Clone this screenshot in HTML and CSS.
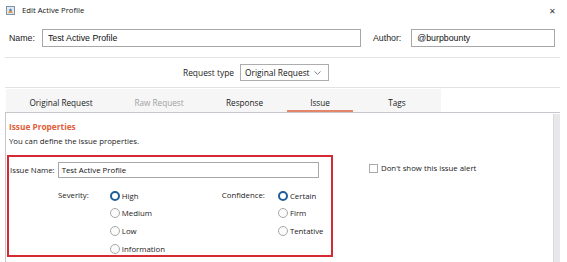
FILE: index.html
```html
<!DOCTYPE html>
<html lang="en">
<head>
    <meta charset="UTF-8">
    <title>Edit Active Profile</title>
    <link rel="stylesheet" href="styles.css">
</head>
<body>
    <div class="dialog">
        <div class="titlebar">
            <svg class="app-icon" width="9" height="9" viewBox="0 0 9 9">
                <rect x="0.5" y="0.5" width="8" height="8" fill="#dfe8f2" stroke="#7d93ad"/>
                <path d="M2 7 L4.5 2.5 L7 7 Z" fill="#e59a3c"/>
                <circle cx="4.5" cy="4" r="1.2" fill="#4f7fb8"/>
            </svg>
            <span class="title">Edit Active Profile</span>
            <span class="close">&#x2715;</span>
        </div>

        <div class="name-row">
            <label class="field-label">Name:</label>
            <div class="text-input name-input">Test Active Profile</div>
            <label class="field-label author-label">Author:</label>
            <div class="text-input author-input">@burpbounty</div>
        </div>

        <div class="separator"></div>

        <div class="reqtype-row">
            <span class="reqtype-label">Request type</span>
            <div class="select">
                <span>Original Request</span>
                <svg width="7" height="4" viewBox="0 0 7 4"><path d="M0.5 0.5 L3.5 3.3 L6.5 0.5" fill="none" stroke="#777" stroke-width="0.9"/></svg>
            </div>
        </div>

        <div class="separator sep-low"></div>

        <div class="tabs">
            <div class="tab tab-original">Original Request</div>
            <div class="tab tab-raw disabled">Raw Request</div>
            <div class="tab tab-response">Response</div>
            <div class="tab tab-issue active">Issue</div>
            <div class="tab tab-tags">Tags</div>
        </div>

        <div class="panel">
            <div class="panel-body">
                <div class="section-title">Issue Properties</div>
                <div class="section-desc">You can define the issue properties.</div>

                <div class="issue-row">
                    <div class="highlight-box">
                        <div class="issue-name">
                            <span>Issue Name:</span>
                            <div class="text-input issue-input">Test Active Profile</div>
                        </div>
                        <div class="options">
                            <div class="group group-severity">
                                <span class="group-label">Severity:</span>
                                <div class="radios radios-severity">
                                    <div class="radio checked"><i></i>High</div>
                                    <div class="radio"><i></i>Medium</div>
                                    <div class="radio"><i></i>Low</div>
                                    <div class="radio"><i></i>Information</div>
                                </div>
                            </div>
                            <div class="group group-confidence">
                                <span class="group-label">Confidence:</span>
                                <div class="radios">
                                    <div class="radio checked"><i></i>Certain</div>
                                    <div class="radio"><i></i>Firm</div>
                                    <div class="radio"><i></i>Tentative</div>
                                </div>
                            </div>
                        </div>
                    </div>
                    <div class="checkbox"><i></i>Don't show this issue alert</div>
                </div>
            </div>
            <div class="scrollbar"></div>
        </div>
    </div>
</body>
</html>
```

FILE: styles.css
```css
body {
    margin: 0;
    background: #fff;
    font-family: "Open Sans", "Noto Sans", sans-serif;
    color: #222;
}
.dialog {
    width: 567px;
    height: 262px;
    overflow: hidden;
    background: #fff;
}
.titlebar {
    height: 20px;
    display: flex;
    align-items: center;
    padding: 0 11px 0 6px;
}
.app-icon {
    margin-right: 7px;
}
.title {
    font-size: 7.7px;
    color: #111;
    flex: 1;
}
.close {
    font-size: 8px;
    color: #333;
}
.name-row {
    display: flex;
    align-items: center;
    margin-top: 9px;
    padding-left: 9px;
    font-family: "Liberation Sans", Arial, sans-serif;
    font-size: 8.8px;
}
.field-label {
    color: #222;
}
.text-input {
    height: 16px;
    line-height: 16px;
    border: 1px solid #a7a7a7;
    padding: 0 5px;
    box-sizing: content-box;
    color: #111;
    background: #fff;
}
.name-input {
    margin-left: 7px;
    width: 307px;
}
.author-label {
    margin-left: 12px;
}
.author-input {
    margin-left: 10px;
    width: 132px;
}
.separator {
    height: 1px;
    background: #e2e2e2;
    margin: 10px 7px 0 5px;
}
.sep-low {
    margin-top: 6px;
}
.reqtype-row {
    display: flex;
    align-items: center;
    margin-top: 6px;
    padding-left: 183px;
    font-size: 8.4px;
}
.select {
    margin-left: 6px;
    width: 76px;
    height: 15px;
    border: 1px solid #adadad;
    display: flex;
    align-items: center;
    justify-content: space-between;
    padding: 0 7px 0 4px;
    color: #111;
}
.tabs {
    display: flex;
    margin: 1px 0 0 6px;
    width: 435px;
    height: 23px;
    background: #f6f6f6;
    font-size: 8.2px;
}
.tab {
    box-sizing: border-box;
    text-align: center;
    padding-top: 8px;
    color: #1a1a1a;
}
.tab-original { width: 110px; }
.tab-raw { width: 86px; }
.tab-response { width: 85px; }
.tab-issue { width: 66px; }
.tab-tags { width: 88px; }
.tab.disabled {
    color: #a0a0a0;
}
.tab.active {
    border-bottom: 2px solid #e2856b;
}
.panel {
    display: flex;
    margin-left: 5px;
    width: 555px;
    height: 160px;
    border-top: 1px solid #c6c6cc;
    border-left: 1px solid #c6c6cc;
    box-sizing: border-box;
}
.panel-body {
    flex: 1;
    padding: 8px 0 0 3px;
}
.scrollbar {
    width: 6px;
    background: #e8e8ea;
    border-left: 1px solid #dadadd;
    margin-top: 1px;
}
.section-title {
    font-size: 8.3px;
    font-weight: bold;
    color: #e0603a;
    line-height: 12px;
}
.section-desc {
    font-size: 7.8px;
    margin-top: 3px;
    line-height: 11px;
    color: #1a1a1a;
}
.issue-row {
    display: flex;
    align-items: flex-start;
    margin-top: 8px;
    margin-left: -2px;
}
.highlight-box {
    width: 322px;
    height: 98px;
    border: 2px solid #d52a33;
    font-size: 7.8px;
}
.issue-name {
    display: flex;
    align-items: center;
    margin-top: 5px;
    padding-left: 1px;
}
.issue-input {
    margin-left: 3px;
    width: 253px;
    height: 14px;
    line-height: 14px;
    font-size: 7.8px;
    font-family: "Open Sans", "Noto Sans", sans-serif;
    padding: 0 3px;
}
.options {
    display: flex;
    margin-top: 9px;
    padding-left: 49px;
}
.group {
    display: flex;
    align-items: flex-start;
}
.group-label {
    line-height: 17.6px;
    margin-right: 21px;
}
.group-confidence .group-label {
    margin-right: 13px;
}
.radios-severity {
    width: 112px;
}
.radio {
    display: flex;
    align-items: center;
    height: 17.6px;
}
.radio i {
    width: 8px;
    height: 8px;
    border: 1px solid #a9a9a9;
    border-radius: 50%;
    background: #fbfbfb;
    margin-right: 2px;
}
.radio.checked i {
    width: 6px;
    height: 6px;
    border: 2px solid #1f5d98;
    background: #fff;
}
.checkbox {
    display: flex;
    align-items: center;
    margin: 8px 0 0 36px;
    font-size: 7.8px;
}
.checkbox i {
    width: 7px;
    height: 7px;
    border: 1px solid #a9a9a9;
    background: #fff;
    margin-right: 3px;
}
```
